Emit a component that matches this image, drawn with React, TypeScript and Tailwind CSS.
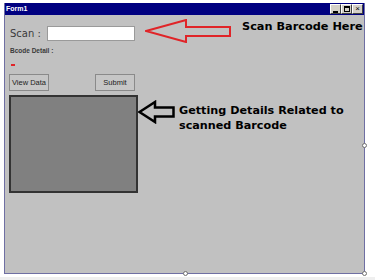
const annot = { fontFamily: '"DejaVu Sans", Verdana, sans-serif' };
const ui = { fontFamily: '"Liberation Sans", Arial, sans-serif' };

function Handle({ className }: { className: string }) {
  return (
    <span
      className={`absolute w-[5px] h-[5px] rounded-full border border-[#707070] bg-white ${className}`}
    />
  );
}

function TitleButton({ kind }: { kind: "min" | "max" | "close" }) {
  return (
    <div className="w-[11px] h-[10px] bg-[#d4d0c8] border border-t-white border-l-white border-r-[#404040] border-b-[#404040] flex items-center justify-center">
      {kind === "min" && <span className="mt-[5px] w-[5px] h-[2px] bg-black" />}
      {kind === "max" && <span className="w-[6px] h-[6px] border border-black border-t-2" />}
      {kind === "close" && (
        <span className="text-[8px] leading-[8px] text-black" style={ui}>
          ×
        </span>
      )}
    </div>
  );
}

export default function App() {
  return (
    <div className="relative w-[375px] h-[280px] bg-white flex flex-col overflow-hidden">
      {/* form window */}
      <div className="ml-[4px] mt-[3px] w-[361px] h-[271px] border-x border-b border-[#6f6fa3] bg-[#c1c1c1] flex flex-col">
        <div className="h-[12px] bg-[#000080] flex items-center">
          <span className="ml-[1px] text-white font-bold text-[7px] leading-[10px]" style={ui}>
            Form1
          </span>
          <div className="ml-auto mr-[1px] flex">
            <TitleButton kind="min" />
            <TitleButton kind="max" />
            <TitleButton kind="close" />
          </div>
        </div>

        {/* scan row */}
        <div className="mt-[4px] flex items-start">
          <span className="ml-[5px] w-[37px] mt-[7px] h-[15px] leading-[15px] text-[10px] text-[#3a3a3a]" style={annot}>
            Scan :
          </span>
          <div className="mt-[7px] w-[88px] h-[15px] bg-white border border-[#9a9a9a]" />
          <svg className="ml-[10px]" width="87" height="24" viewBox="0 0 87 24">
            <polygon
              points="1,12 41,1 41,8 85,8 85,17 41,17 41,23"
              fill="none"
              stroke="#e02428"
              strokeWidth="2"
              strokeLinejoin="miter"
            />
          </svg>
          <span className="ml-[10px] text-[11.3px] leading-[15px] font-bold text-black whitespace-nowrap" style={annot}>
            Scan Barcode Here
          </span>
        </div>

        <span className="mt-[4px] ml-[5px] text-[6.5px] leading-[8px] font-bold text-[#3a3a3a]" style={ui}>
          Bcode Detail :
        </span>
        <span className="mt-[9px] ml-[6px] w-[4px] h-[2px] bg-[#e02428]" />

        {/* buttons */}
        <div className="mt-[8px] flex">
          <button
            className="ml-[4px] w-[40px] h-[17px] bg-[#c6c6c6] border border-[#8a8a8a] text-[7.5px] text-[#222]"
            style={ui}
          >
            View Data
          </button>
          <button
            className="ml-[46px] w-[40px] h-[17px] bg-[#c6c6c6] border border-[#8a8a8a] text-[7.5px] text-[#222]"
            style={ui}
          >
            Submit
          </button>
        </div>

        {/* detail panel */}
        <div className="mt-[4px] flex items-start">
          <div className="ml-[4px] w-[129px] h-[98px] bg-[#808080] border-2 border-[#333333]" />
          <svg className="mt-[5px]" width="37" height="24" viewBox="0 0 37 24">
            <polygon
              points="1.5,12 17,2 17,7.5 35.5,7.5 35.5,16.5 17,16.5 17,22"
              fill="none"
              stroke="#000"
              strokeWidth="2.5"
            />
          </svg>
          <p className="ml-[4px] mt-[8px] text-[11.2px] leading-[15px] font-bold text-black" style={annot}>
            Getting Details Related to
            <br />
            scanned Barcode
          </p>
        </div>
      </div>

      <div className="mt-[3px] h-[3px] bg-[#efefef]" />

      <Handle className="left-[362px] top-[143px]" />
      <Handle className="left-[183px] top-[271px]" />
      <Handle className="left-[362px] top-[271px]" />
    </div>
  );
}
